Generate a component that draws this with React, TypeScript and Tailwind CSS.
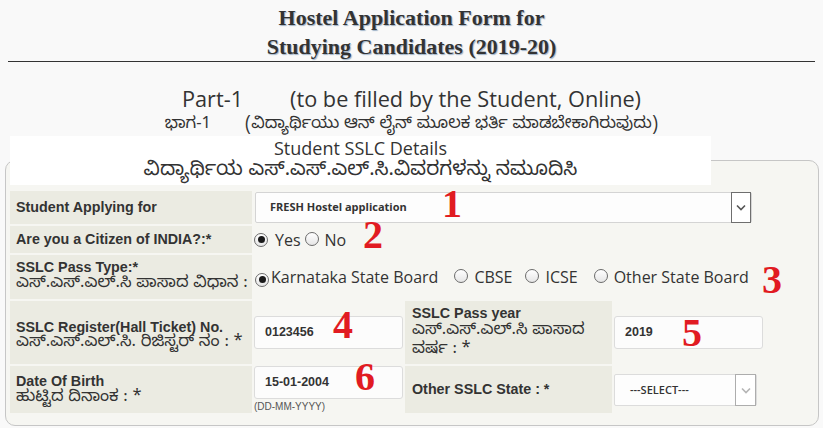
import React from 'react';

const kn = "font-['Noto_Sans_Kannada','Noto_Sans',sans-serif]";

const Num = ({ n, className }: { n: string; className: string }) => (
  <span
    className={`pointer-events-none absolute font-['Liberation_Serif',serif] text-[40px] font-bold leading-[30px] text-[#e11b22] ${className}`}
  >
    {n}
  </span>
);

const Radio = ({ checked }: { checked?: boolean }) => (
  <span className="inline-flex size-[14px] shrink-0 items-center justify-center rounded-full border border-[#6b6b6b] bg-gradient-to-b from-[#ffffff] to-[#e6e6e6]">
    {checked && <span className="size-[7px] rounded-full bg-[#1a1a1a]" />}
  </span>
);

const Chevron = ({ color }: { color: string }) => (
  <svg width="10" height="7" viewBox="0 0 10 7" fill="none">
    <path d="M1 1.5 L5 5.5 L9 1.5" stroke={color} strokeWidth="1.6" />
  </svg>
);

const Label = ({ children, className = '' }: { children: React.ReactNode; className?: string }) => (
  <div
    className={`flex flex-col justify-center bg-[#ebebe2] font-['Liberation_Sans',Arial,sans-serif] text-[14.3px] text-[#333] ${className}`}
  >
    {children}
  </div>
);

const TextBox = ({ value, className = '' }: { value: string; className?: string }) => (
  <div
    className={`flex items-center rounded-[3px] border border-[#dcdcdc] bg-[#fcfcfc] pl-[10px] font-['Liberation_Sans',Arial,sans-serif] text-[12.5px] font-bold text-[#333] ${className}`}
  >
    {value}
  </div>
);

export default function App() {
  return (
    <div className="h-[428px] w-[823px] overflow-hidden bg-[#f9f9f9]">
      {/* heading */}
      <div className="mx-[8px] border-b border-[#333] pt-[3px] text-center font-['Liberation_Serif',serif] text-[22px] font-bold leading-[29px] text-[#333] [text-shadow:1px_1px_1px_#9fb3c8]">
        <div>Hostel Application Form for</div>
        <div>Studying Candidates (2019-20)</div>
      </div>

      <div className="mt-[23px] text-center font-['Open_Sans',sans-serif] text-[21.7px] leading-[28px] text-[#333]">
        <span>Part-1</span>
        <span className="ml-[47px]">(to be filled by the Student, Online)</span>
      </div>
      <div className={`mt-[3px] text-center text-[16.5px] leading-[20px] text-[#333] ${kn}`}>
        <span>ಭಾಗ-1</span>
        <span className="ml-[34px]">(ವಿದ್ಯಾರ್ಥಿಯು ಆನ್ ಲೈನ್ ಮೂಲಕ ಭರ್ತಿ ಮಾಡಬೇಕಾಗಿರುವುದು)</span>
      </div>

      <fieldset className="ml-[5px] w-[814px] rounded-[10px] border border-[#c6c6c6] bg-[#f6f6f2] pr-[5px] pb-[12px] pl-[4px]">
        <legend className="w-[701px] bg-white text-[#333]">
          <div className="w-full text-center">
            <div className="font-['Open_Sans',sans-serif] text-[18px] leading-[24px]">Student SSLC Details</div>
            <div className={`text-[20px] leading-[25px] ${kn}`}>ವಿದ್ಯಾರ್ಥಿಯ ಎಸ್.ಎಸ್.ಎಲ್.ಸಿ.ವಿವರಗಳನ್ನು ನಮೂದಿಸಿ</div>
          </div>
        </legend>

        <div className="mt-[6px] grid grid-cols-[242px_149px_207px_1fr] grid-rows-[33px_27px_44px_63px_47px] gap-[2px]">
          {/* row 1 */}
          <Label className="pl-[6px] font-bold">Student Applying for</Label>
          <div className="relative col-span-3 py-[1px] pl-[1px]">
            <div className="flex h-full w-[497px] items-center justify-between rounded-[2px] border border-[#d4d4d4] bg-[#fdfdfd] pl-[14px]">
              <span className="font-['Open_Sans',sans-serif] text-[11px] font-bold text-[#333]">FRESH Hostel application</span>
              <span className="flex h-[31px] w-[20px] items-center justify-center border border-[#6e6e6e] bg-white">
                <Chevron color="#555" />
              </span>
            </div>
            <Num n="1" className="left-[188px] top-[-2px]" />
          </div>

          {/* row 2 */}
          <Label className="pl-[6px] font-bold">Are you a Citizen of INDIA?:*</Label>
          <div className="relative col-span-3 flex items-center font-['Open_Sans',sans-serif] text-[16px] text-[#333]">
            <Radio checked />
            <span className="ml-[7px]">Yes</span>
            <span className="ml-[4px]">
              <Radio />
            </span>
            <span className="ml-[6px]">No</span>
            <Num n="2" className="left-[109px] top-[-6px]" />
          </div>

          {/* row 3 */}
          <Label className="pl-[6px] leading-[17px]">
            <span className="font-bold">SSLC Pass Type:*</span>
            <span className={`text-[16.5px] leading-[19px] ${kn}`}>ಎಸ್.ಎಸ್.ಎಲ್.ಸಿ ಪಾಸಾದ ವಿಧಾನ :</span>
          </Label>
          <div className="relative col-span-3 flex items-center font-['Open_Sans',sans-serif] text-[16px] text-[#333]">
            <span className="ml-[1px]">
              <Radio checked />
            </span>
            <span className="ml-[2px]">Karnataka State Board</span>
            <span className="ml-[16px]">
              <Radio />
            </span>
            <span className="ml-[6px]">CBSE</span>
            <span className="ml-[13px]">
              <Radio />
            </span>
            <span className="ml-[6px]">ICSE</span>
            <span className="ml-[16px]">
              <Radio />
            </span>
            <span className="ml-[6px]">Other State Board</span>
            <Num n="3" className="left-[508px] top-[10px]" />
          </div>

          {/* row 4 */}
          <Label className="pt-[8px] pl-[6px]">
            <span className="font-bold leading-[15px]">SSLC Register(Hall Ticket) No.</span>
            <span className={`text-[16.5px] leading-[19px] ${kn}`}>ಎಸ್.ಎಸ್.ಎಲ್.ಸಿ. ರಿಜಿಸ್ಟರ್ ನಂ : *</span>
          </Label>
          <div className="relative flex items-center">
            <TextBox value="0123456" className="h-[33px] w-full" />
            <Num n="4" className="left-[79px] top-[9px]" />
          </div>
          <Label className="pl-[7px] leading-[19px]">
            <span className="font-bold">SSLC Pass year</span>
            <span className={`text-[16.5px] ${kn}`}>ಎಸ್.ಎಸ್.ಎಲ್.ಸಿ ಪಾಸಾದ</span>
            <span className={`text-[16.5px] ${kn}`}>ವರ್ಷ : *</span>
          </Label>
          <div className="relative flex items-center">
            <TextBox value="2019" className="h-[33px] w-[149px]" />
            <Num n="5" className="left-[68px] top-[17px]" />
          </div>

          {/* row 5 */}
          <Label className="pl-[6px] leading-[18px]">
            <span className="font-bold">Date Of Birth</span>
            <span className={`text-[16.5px] ${kn}`}>ಹುಟ್ಟಿದ ದಿನಾಂಕ : *</span>
          </Label>
          <div className="relative">
            <TextBox value="15-01-2004" className="h-[33px] w-full" />
            <div className="mt-[2px] font-['Liberation_Sans',Arial,sans-serif] text-[10px] leading-[12px] text-[#555]">(DD-MM-YYYY)</div>
            <Num n="6" className="left-[101px] top-[-4px]" />
          </div>
          <Label className="pl-[7px] font-bold">Other SSLC State : *</Label>
          <div className="pt-[8px]">
            <div className="flex h-[32px] w-[143px] items-center justify-between rounded-[2px] border border-[#dcdcdc] bg-[#fdfdfd] pl-[15px]">
              <span className="font-['Open_Sans',sans-serif] text-[11px] font-semibold text-[#333]">---SELECT---</span>
              <span className="flex h-[32px] w-[21px] items-center justify-center border border-[#adadad] bg-white">
                <Chevron color="#b5b5b5" />
              </span>
            </div>
          </div>
        </div>
      </fieldset>
    </div>
  );
}
